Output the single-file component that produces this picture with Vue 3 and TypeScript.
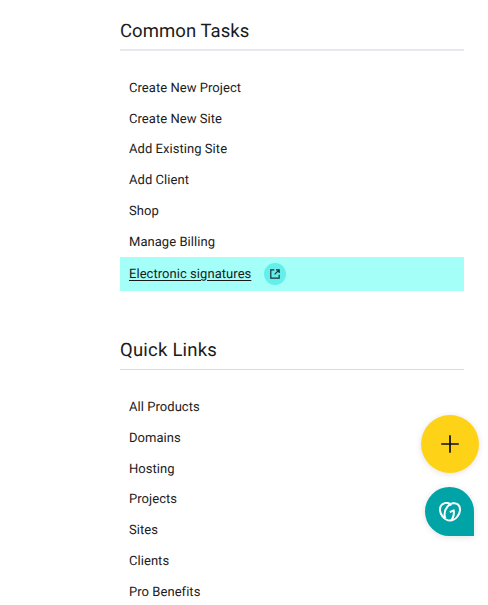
<script setup lang="ts">
interface MenuItem {
  label: string
  external?: boolean
}

interface MenuSection {
  id: string
  title: string
  items: MenuItem[]
}

const sections: MenuSection[] = [
  {
    id: 'tasks',
    title: 'Common Tasks',
    items: [
      { label: 'Create New Project' },
      { label: 'Create New Site' },
      { label: 'Add Existing Site' },
      { label: 'Add Client' },
      { label: 'Shop' },
      { label: 'Manage Billing' },
      { label: 'Electronic signatures', external: true },
    ],
  },
  {
    id: 'links',
    title: 'Quick Links',
    items: [
      { label: 'All Products' },
      { label: 'Domains' },
      { label: 'Hosting' },
      { label: 'Projects' },
      { label: 'Sites' },
      { label: 'Clients' },
      { label: 'Pro Benefits' },
    ],
  },
]
</script>

<template>
  <main class="page">
    <section v-for="section in sections" :key="section.id" class="section" :class="section.id">
      <h2 class="title">{{ section.title }}</h2>
      <ul class="list">
        <li v-for="item in section.items" :key="item.label" class="item" :class="{ active: item.external }">
          <a class="link">{{ item.label }}</a>
          <span v-if="item.external" class="badge">
            <svg viewBox="0 0 10 10" width="10" height="10" fill="none" stroke="#173536" stroke-width="1.2">
              <path d="M4.3 .8H.8v8.4h8.4V5.7M6 .8h3.2V4M9.2 .8L4.6 5.4" />
            </svg>
          </span>
        </li>
      </ul>
    </section>

    <div class="actions">
      <button class="add" aria-label="Add">
        <svg viewBox="0 0 18 18" width="18" height="18" fill="none" stroke="#111" stroke-width="1.7" stroke-linecap="round">
          <path d="M9 .9v16.2M.9 9h16.2" />
        </svg>
      </button>
      <button class="help" aria-label="Help">
        <svg viewBox="0 0 22 20" width="22" height="20" fill="none" stroke="#fff" stroke-width="2" stroke-linejoin="round">
          <path d="M12.700 2.900C9.800 .4 5.700 .2 3 2.600C-.2 5.500 .7 11 3.600 14.500C5.500 16.900 8.200 18.600 11 18.600C13.800 18.600 16.500 16.900 18.400 14.500C21.300 11 22.200 5.500 19 2.600C16.100 0 11.200 1 8.400 4.700C5.500 8.500 4.800 12.800 6.500 16.500" />
          <path d="M10.800 10.200L14.800 8.400C15.300 12.200 14.300 15.700 12.200 18.100" />
        </svg>
      </button>
    </div>
  </main>
</template>

<style>
body {
  margin: 0;
  background: #fff;
}
</style>

<style scoped>
.page {
  box-sizing: border-box;
  height: 605px;
  padding: 15px 24px 0 120px;
  overflow: hidden;
  color: #1b1b1b;
  font-family: Roboto, "Liberation Sans", sans-serif;
  text-rendering: geometricPrecision;
}

.section.links {
  margin-top: 43px;
}

.title {
  box-sizing: border-box;
  height: 36px;
  margin: 0 0 21px;
  border-bottom: 1px solid #d9dcde;
  font-size: 18.5px;
  font-weight: 400;
  line-height: 32px;
  letter-spacing: 0.07px;
}

.links .title {
  letter-spacing: 0.22px;
}

.tasks .title {
  border-bottom: 2px solid #e6e9ed;
}

.list {
  margin: 0;
  padding: 0;
  list-style: none;
}

.item {
  display: flex;
  align-items: center;
  height: 30.75px;
  padding-left: 9px;
  font-size: 13px;
  line-height: 16px;
  letter-spacing: 0.05px;
}

.link {
  padding-top: 3px;
}

.links .link {
  padding-top: 4.5px;
}

.item.active {
  height: 33.5px;
  margin-top: 0.5px;
  background: #a5fff9;
}

.active .link {
  padding-top: 2px;
  text-decoration: underline;
  text-underline-offset: 2px;
}

.badge {
  display: grid;
  place-items: center;
  width: 22px;
  height: 22px;
  margin-left: 13px;
  border-radius: 50%;
  background: #64efeb;
}

.actions {
  position: fixed;
  top: 415px;
  right: 9.5px;
  display: flex;
  flex-direction: column;
  align-items: center;
  gap: 14px;
}

.add,
.help {
  display: grid;
  place-items: center;
  padding: 0;
  border: 0;
}

.add {
  width: 58px;
  height: 58px;
  border-radius: 50%;
  background: #fed317;
  box-shadow: 0 1px 6px rgba(0, 0, 0, 0.12);
}

.help {
  width: 49px;
  height: 49px;
  border-radius: 50% 50% 0 50%;
  background: #00a4a6;
  box-shadow: 0 1px 6px rgba(0, 0, 0, 0.12);
}
</style>
